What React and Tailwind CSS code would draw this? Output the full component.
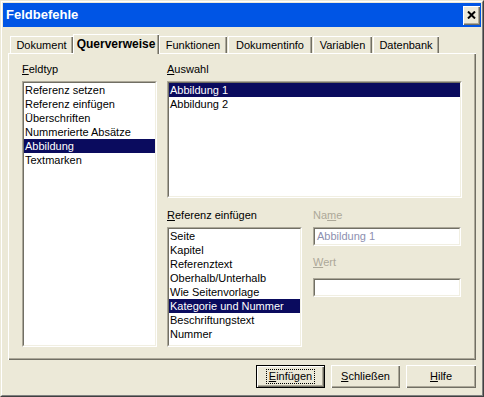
const raised =
  'shadow-[inset_1px_1px_0_#ffffff,inset_-1px_-1px_0_#716f64,inset_-2px_-2px_0_#aca899]';

function Sunken({ className = '', children }) {
  return (
    <div className={`border border-t-[#aca899] border-l-[#aca899] border-b-white border-r-white ${className}`}>
      <div className="h-full overflow-hidden border border-t-[#716f64] border-l-[#716f64] border-b-[#f1efe2] border-r-[#f1efe2] bg-white">
        {children}
      </div>
    </div>
  );
}

function ListBox({ items, selected, className }) {
  return (
    <Sunken className={className}>
      {items.map((item) => (
        <div
          key={item}
          className={`h-[14px] pl-[1px] leading-[14px] whitespace-nowrap ${
            item === selected ? 'bg-[#0a0b5e] text-white' : 'text-black'
          }`}
        >
          {item}
        </div>
      ))}
    </Sunken>
  );
}

function Tab({ label, width, active }) {
  if (active) {
    return (
      <div
        className={`relative z-10 -mb-[1px] flex h-[20px] items-center justify-center bg-[#ece9d8] text-[12px] font-bold text-black shadow-[inset_1px_1px_0_#ffffff,inset_-1px_0_0_#716f64,inset_-2px_0_0_#aca899] ${width}`}
      >
        {label}
      </div>
    );
  }
  return (
    <div
      className={`flex h-[17px] items-center justify-center pt-[1px] text-[11px] text-black shadow-[inset_1px_1px_0_#ffffff,inset_-1px_0_0_#716f64,inset_-2px_0_0_#aca899] ${width}`}
    >
      {label}
    </div>
  );
}

function Button({ children, width, isDefault }) {
  if (isDefault) {
    return (
      <button className={`h-[23px] border border-black bg-[#ece9d8] p-0 ${width}`}>
        <div className={`flex h-full items-center justify-center ${raised}`}>
          <span className="border border-dotted border-black px-[2px] leading-[13px]">{children}</span>
        </div>
      </button>
    );
  }
  return (
    <button className={`flex h-[23px] items-center justify-center bg-[#ece9d8] ${raised} ${width}`}>
      {children}
    </button>
  );
}

export default function App() {
  return (
    <div
      className="h-[397px] w-[484px] border border-t-[#ece9d8] border-l-[#ece9d8] border-b-[#404040] border-r-[#404040] bg-[#ece9d8] text-[11px] text-black"
      style={{ fontFamily: '"Liberation Sans", Arial, sans-serif' }}
    >
      <div className="h-full border border-t-white border-l-white border-b-[#808080] border-r-[#808080] p-[1px]">
        {/* Title bar */}
        <div className="flex h-[24px] items-center justify-between bg-[#0055e5] pl-[3px] pr-[1px]">
          <span className="text-[13px] font-bold text-white">Feldbefehle</span>
          <div className={`flex h-[19px] w-[17px] items-center justify-center bg-[#ece9d8] ${raised}`}>
            <svg width="9" height="8" viewBox="0 0 9 8">
              <path d="M1 0.5 L8 7.5 M8 0.5 L1 7.5" stroke="black" strokeWidth="2" />
            </svg>
          </div>
        </div>

        {/* Body */}
        <div className="px-[5px] pt-[7px]">
          <div className="flex items-end pl-[2px]">
            <Tab label="Dokument" width="w-[63px]" />
            <Tab label="Querverweise" width="w-[86px]" active />
            <Tab label="Funktionen" width="w-[68px]" />
            <div className="w-[1px]" />
            <Tab label="Dokumentinfo" width="w-[84px]" />
            <div className="w-[1px]" />
            <Tab label="Variablen" width="w-[59px]" />
            <div className="w-[1px]" />
            <Tab label="Datenbank" width="w-[66px]" />
          </div>

          <div className={`flex h-[307px] gap-[10px] pl-[14px] pt-[9px] leading-[14px] ${raised}`}>
            {/* Feldtyp */}
            <div className="flex w-[135px] flex-col">
              <div className="h-[14px]">
                <span className="underline">F</span>eldtyp
              </div>
              <ListBox
                className="mt-[5px] h-[266px]"
                selected="Abbildung"
                items={[
                  'Referenz setzen',
                  'Referenz einfügen',
                  'Überschriften',
                  'Nummerierte Absätze',
                  'Abbildung',
                  'Textmarken',
                ]}
              />
            </div>

            {/* Right column */}
            <div className="flex w-[295px] flex-col">
              <div className="h-[14px]">
                <span className="underline">A</span>uswahl
              </div>
              <ListBox
                className="mt-[5px] h-[117px]"
                selected="Abbildung 1"
                items={['Abbildung 1', 'Abbildung 2']}
              />

              <div className="mt-[10px] flex gap-[11px]">
                <div className="flex w-[135px] flex-col">
                  <div className="h-[14px]">
                    <span className="underline">R</span>eferenz einfügen
                  </div>
                  <ListBox
                    className="mt-[5px] h-[120px]"
                    selected="Kategorie und Nummer"
                    items={[
                      'Seite',
                      'Kapitel',
                      'Referenztext',
                      'Oberhalb/Unterhalb',
                      'Wie Seitenvorlage',
                      'Kategorie und Nummer',
                      'Beschriftungstext',
                      'Nummer',
                    ]}
                  />
                </div>

                <div className="flex w-[148px] flex-col text-[#aca899]">
                  <div className="h-[14px]">
                    Na<span className="underline">m</span>e
                  </div>
                  <Sunken className="mt-[5px] h-[19px]">
                    <div className="pl-[2px] leading-[15px] text-[#8d90b0]">Abbildung 1</div>
                  </Sunken>
                  <div className="mt-[9px] h-[14px]">
                    <span className="underline">W</span>ert
                  </div>
                  <Sunken className="mt-[9px] h-[19px]" />
                </div>
              </div>
            </div>
          </div>

          {/* Buttons */}
          <div className="mt-[5px] flex justify-end gap-[6px]">
            <Button width="w-[69px]" isDefault>
              <span className="underline">E</span>infügen
            </Button>
            <Button width="w-[69px]">
              <span className="underline">S</span>chließen
            </Button>
            <Button width="w-[70px]">
              <span className="underline">H</span>ilfe
            </Button>
          </div>
        </div>
      </div>
    </div>
  );
}
